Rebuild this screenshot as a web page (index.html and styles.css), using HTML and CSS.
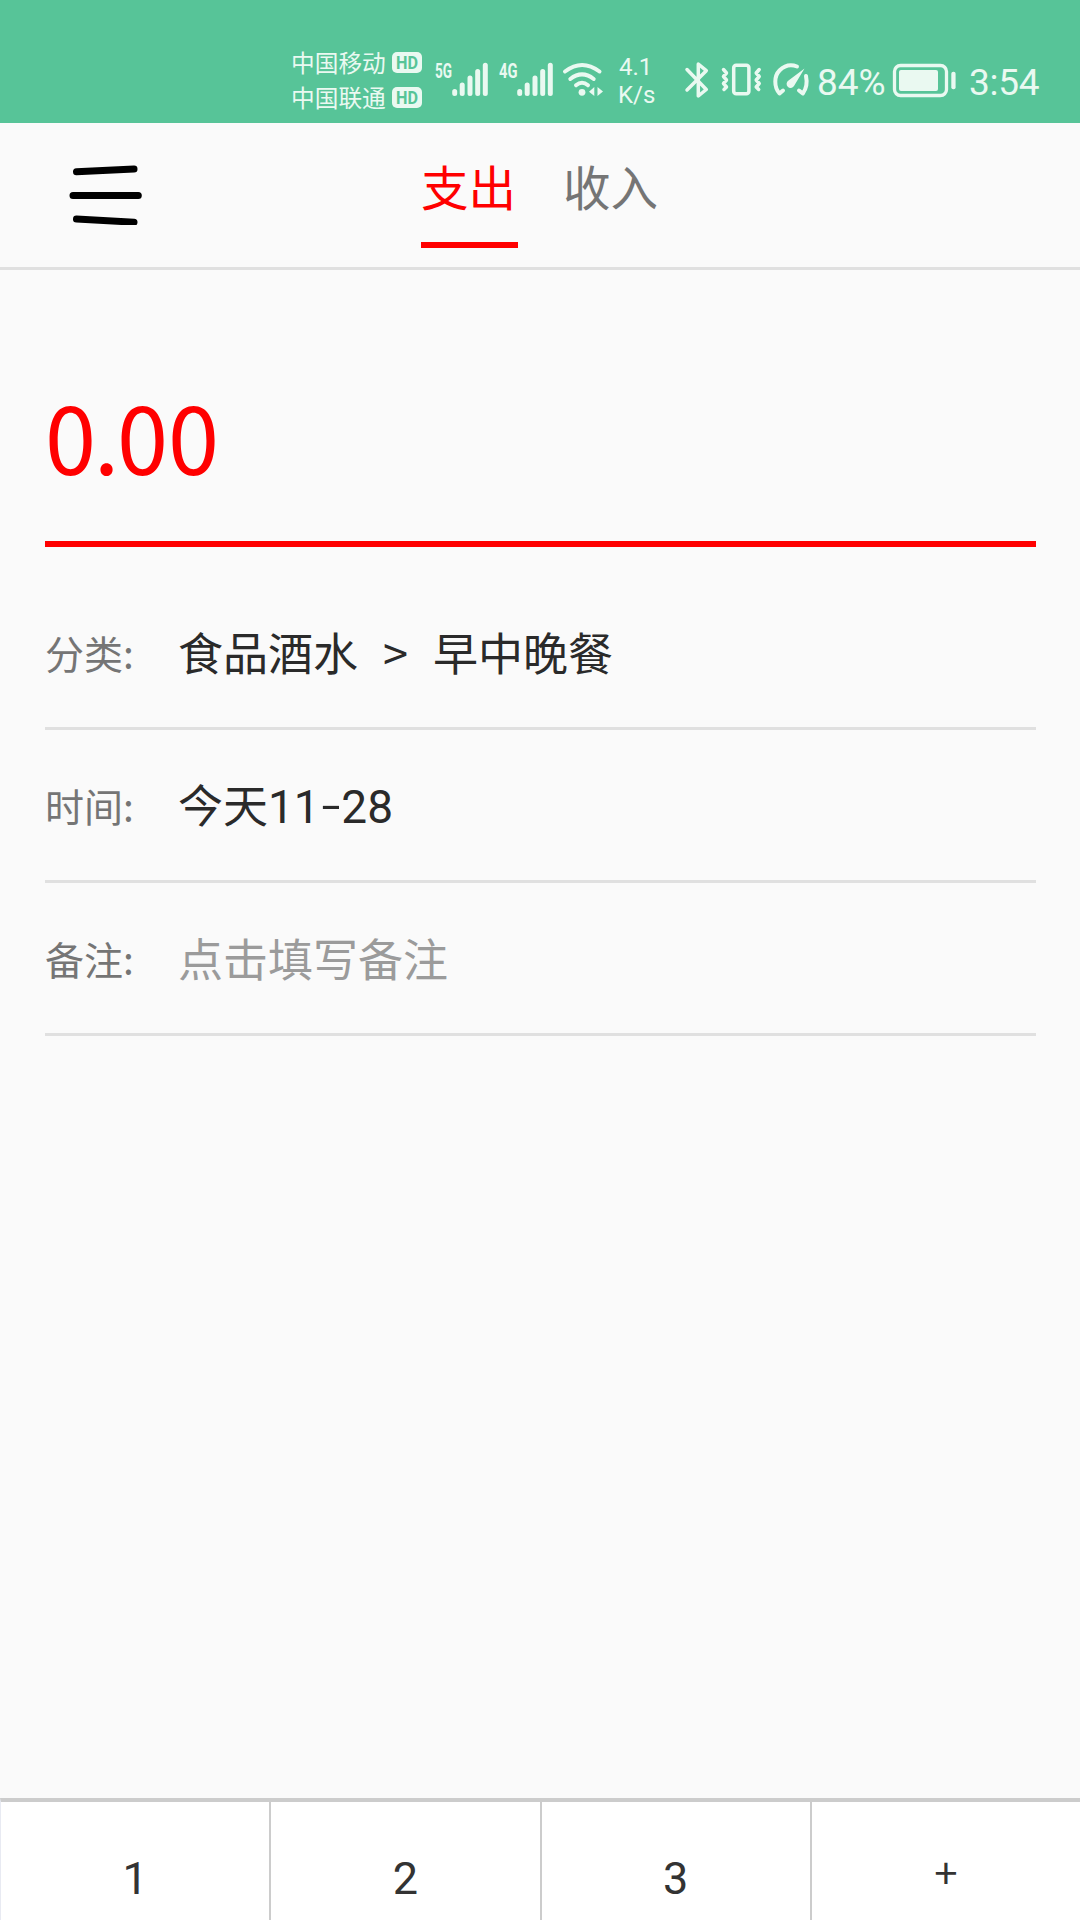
FILE: index.html
```
<!DOCTYPE html>
<html lang="zh-CN">
<head>
    <meta charset="UTF-8">
    <meta name="viewport" content="width=device-width, initial-scale=1.0">
    <title>记账</title>
    <link rel="stylesheet" href="styles.css">
</head>

<body>
    <div class="status-bar">
        <div class="carriers">
            <div class="carrier"><span>中国移动</span><svg width="30" height="21" viewBox="0 0 30 21"><rect width="30" height="21" rx="5" fill="#eaf9f1"/><text x="4" y="17" class="hd" textLength="22" lengthAdjust="spacingAndGlyphs">HD</text></svg></div>
            <div class="carrier"><span>中国联通</span><svg width="30" height="21" viewBox="0 0 30 21"><rect width="30" height="21" rx="5" fill="#eaf9f1"/><text x="4" y="17" class="hd" textLength="22" lengthAdjust="spacingAndGlyphs">HD</text></svg></div>
        </div>

        <svg class="icon signal" width="54" height="40" viewBox="0 0 54 40">
            <text x="0" y="17.7" class="net" textLength="17" lengthAdjust="spacingAndGlyphs">5G</text>
            <path d="M19.7 31.5v2M27.2 25v8.5M35 18v15.5M42.7 11.5v22M50.3 5.2v28.3"/>
        </svg>
        <svg class="icon signal-2" width="54" height="40" viewBox="0 0 54 40">
            <text x="-1" y="17.7" class="net" textLength="18.5" lengthAdjust="spacingAndGlyphs">4G</text>
            <path d="M19.7 31.5v2M27.2 25v8.5M35 18v15.5M42.7 11.5v22M50.3 5.2v28.3"/>
        </svg>
        <svg class="icon wifi" width="44" height="40" viewBox="560 60 44 40">
            <path d="M565 71.5Q582 58.5 599.5 71.5M570.3 79Q582 69.8 593.7 79M576 85.3Q582 80.2 588 85.3"/>
            <circle class="solid" cx="582" cy="92.3" r="3.4"/>
            <path class="solid" d="M589 91.7l5.3-4.6v9zM597.5 87.1v9l5.5-4.5z"/>
        </svg>
        <div class="speed"><span>4.1</span><br>K/s</div>
        <svg class="icon bluetooth" width="24" height="40" viewBox="686 60 24 40">
            <path d="M688 69.5l19.3 20-8 6.500V64l8 6.700L688 90"/>
        </svg>
        <svg class="icon vibrate" width="41" height="40" viewBox="721 60 41 40">
            <rect x="733.7" y="65.3" width="15.2" height="28.5" rx="2.5"/>
            <path d="M723.5 69.5l3 3.5-3 3.5 3 3.5-3 3.5 3 3.5-2.5 2.5M759.2 69.5l-3 3.5 3 3.5-3 3.5 3 3.5-3 3.5 2.5 2.5"/>
        </svg>
        <svg class="icon gauge" width="38" height="40" viewBox="772 60 38 40">
            <path d="M783 90.5l-3.5 3C773.8 87 774 76 779.5 70.5S791.5 64.3 797 66.5M806 76C807.5 83 806.5 88.5 802.8 93.5L799 90.5"/>
            <path class="solid" d="M804.5 68.5L794 86A4 4 0 1 1 788.5 80.5z"/>
        </svg>
        <div class="percent">84%</div>
        <svg class="icon battery" width="65" height="40" viewBox="892 60 65 40">
            <rect x="894.5" y="65.5" width="52" height="30" rx="6"/>
            <rect class="solid" x="899" y="70" width="39" height="21" rx="2"/>
            <rect class="solid" x="951.3" y="71.7" width="4.3" height="17.5" rx="2"/>
        </svg>
        <div class="clock">3:54</div>
    </div>

    <div class="header">
        <svg class="menu" width="76" height="60" viewBox="68 165 76 60">
            <path d="M76.5 171.8L134 169M73 195.5H138.3M76.5 219L134 222.2"/>
        </svg>
        <div class="tabs">
            <div class="tab active">支出</div>
            <div class="tab">收入</div>
        </div>
    </div>

    <div class="form">
        <div class="amount">0<span class="dot">.</span>00</div>

        <div class="row">
            <div class="label">分类:</div>
            <div class="value">食品酒水<span class="arrow">&gt;</span>早中晚餐</div>
        </div>
        <div class="row">
            <div class="label">时间:</div>
            <div class="value">今天<span class="digits">11</span><span class="dash">-</span><span class="digits">28</span></div>
        </div>
        <div class="row">
            <div class="label">备注:</div>
            <div class="value placeholder">点击填写备注</div>
        </div>
    </div>

    <div class="keyboard">
        <div class="key">1</div>
        <div class="key">2</div>
        <div class="key">3</div>
        <div class="key plus">+</div>
    </div>
</body>
</html>
```
FILE: styles.css
```
* {
    box-sizing: border-box;
}

body {
    margin: 0;
    height: 1920px;
    display: flex;
    flex-direction: column;
    overflow: hidden;
    background-color: #fafafa;
    font-family: "Noto Sans CJK SC", "Noto Sans", sans-serif;
}

/* status bar */
.status-bar {
    height: 123px;
    flex: none;
    display: flex;
    align-items: flex-start;
    padding-left: 291px;
    background-color: #57c498;
    color: #eaf9f1;
    white-space: nowrap;
}

.carriers {
    width: 144px;
    padding-top: 45px;
}

.carrier {
    display: flex;
    align-items: center;
    gap: 6px;
    height: 35px;
    font-size: 23.7px;
    line-height: 35px;
}

.hd {
    font: bold 18px Roboto, sans-serif;
    fill: #57c498;
    stroke: none;
}

.net {
    font: bold 19.5px Roboto, sans-serif;
    fill: #eaf9f1;
    stroke: none;
}

.icon {
    flex: none;
    margin-top: 60px;
    overflow: visible;
    fill: none;
    stroke: #eaf9f1;
    stroke-width: 4;
    stroke-linecap: round;
    stroke-linejoin: round;
}

.icon .solid {
    fill: #eaf9f1;
    stroke: none;
}

.signal,
.signal-2 {
    stroke-width: 5;
}

.signal-2 {
    margin-left: 11.3px;
}

.wifi {
    margin-left: 5.7px;
}

.speed {
    width: 68px;
    margin-left: 14px;
    padding-top: 53px;
    font-family: Roboto, sans-serif;
    font-size: 24px;
    line-height: 28px;
}

.speed span {
    padding-left: 1px;
}

.bluetooth {
    margin-left: -1px;
    stroke-width: 3.5;
}

.vibrate {
    margin-left: 12px;
    stroke-width: 3.5;
}

.gauge {
    margin-left: 10px;
}

.percent {
    width: 75px;
    margin-left: 7px;
    padding-top: 61px;
    font-family: Roboto, sans-serif;
    font-size: 37px;
    line-height: 44px;
}

.battery {
    stroke-width: 3.3;
}

.clock {
    margin-left: 12px;
    padding-top: 61px;
    font-family: Roboto, sans-serif;
    font-size: 37px;
    line-height: 44px;
    letter-spacing: -0.3px;
}

/* header */
.header {
    height: 147px;
    flex: none;
    display: flex;
    align-items: flex-start;
    border-bottom: 3px solid #e0e0e0;
}

.menu {
    margin: 42px 277px 0 68px;
    fill: none;
    stroke: #000;
    stroke-width: 7;
    stroke-linecap: round;
}

.tabs {
    display: flex;
    gap: 45px;
}

.tab {
    width: 97px;
    height: 125px;
    padding-top: 31px;
    font-size: 47.5px;
    line-height: 64px;
    color: #757575;
}

.tab.active {
    color: #f00;
    border-bottom: 6px solid #f00;
}

/* form */
.form {
    flex: 1;
    padding: 0 44px 0 45px;
}

.amount {
    height: 277px;
    padding-top: 98px;
    border-bottom: 6px solid #f00;
    color: #f00;
    font-size: 92px;
    line-height: 134px;
}

.amount .dot {
    margin: 0 -2.3px;
}

.row {
    display: flex;
    align-items: center;
    height: 153px;
    border-bottom: 3px solid #e0e0e0;
}

.row:nth-child(2) {
    height: 183px;
    padding-top: 30px;
}

.label {
    width: 133px;
    font-size: 39px;
    color: #757575;
}

.value {
    font-size: 45px;
    line-height: 66px;
    color: #2a2a2a;
    white-space: nowrap;
}

.placeholder {
    color: #9b9b9b;
}

.arrow {
    margin: 0 25px;
}

.digits {
    font-family: Roboto, sans-serif;
    font-size: 46px;
}

.dash {
    display: inline-block;
    margin: 0 3px;
    transform: translateY(-3px) scaleX(1.4);
}

/* keyboard */
.keyboard {
    display: flex;
    height: 122px;
    flex: none;
    border-top: 4px solid #ccc;
    border-left: 1px solid #e8eaf2;
    background-color: #fff;
}

.key {
    flex: 1;
    padding-top: 43px;
    border-right: 2px solid #ccc;
    font-family: Roboto, sans-serif;
    font-size: 45px;
    line-height: 67px;
    text-align: center;
    color: #333;
}

.plus {
    padding-top: 35px;
    border-right: none;
    font-family: "Noto Sans CJK SC", sans-serif;
    font-size: 42px;
}
```
